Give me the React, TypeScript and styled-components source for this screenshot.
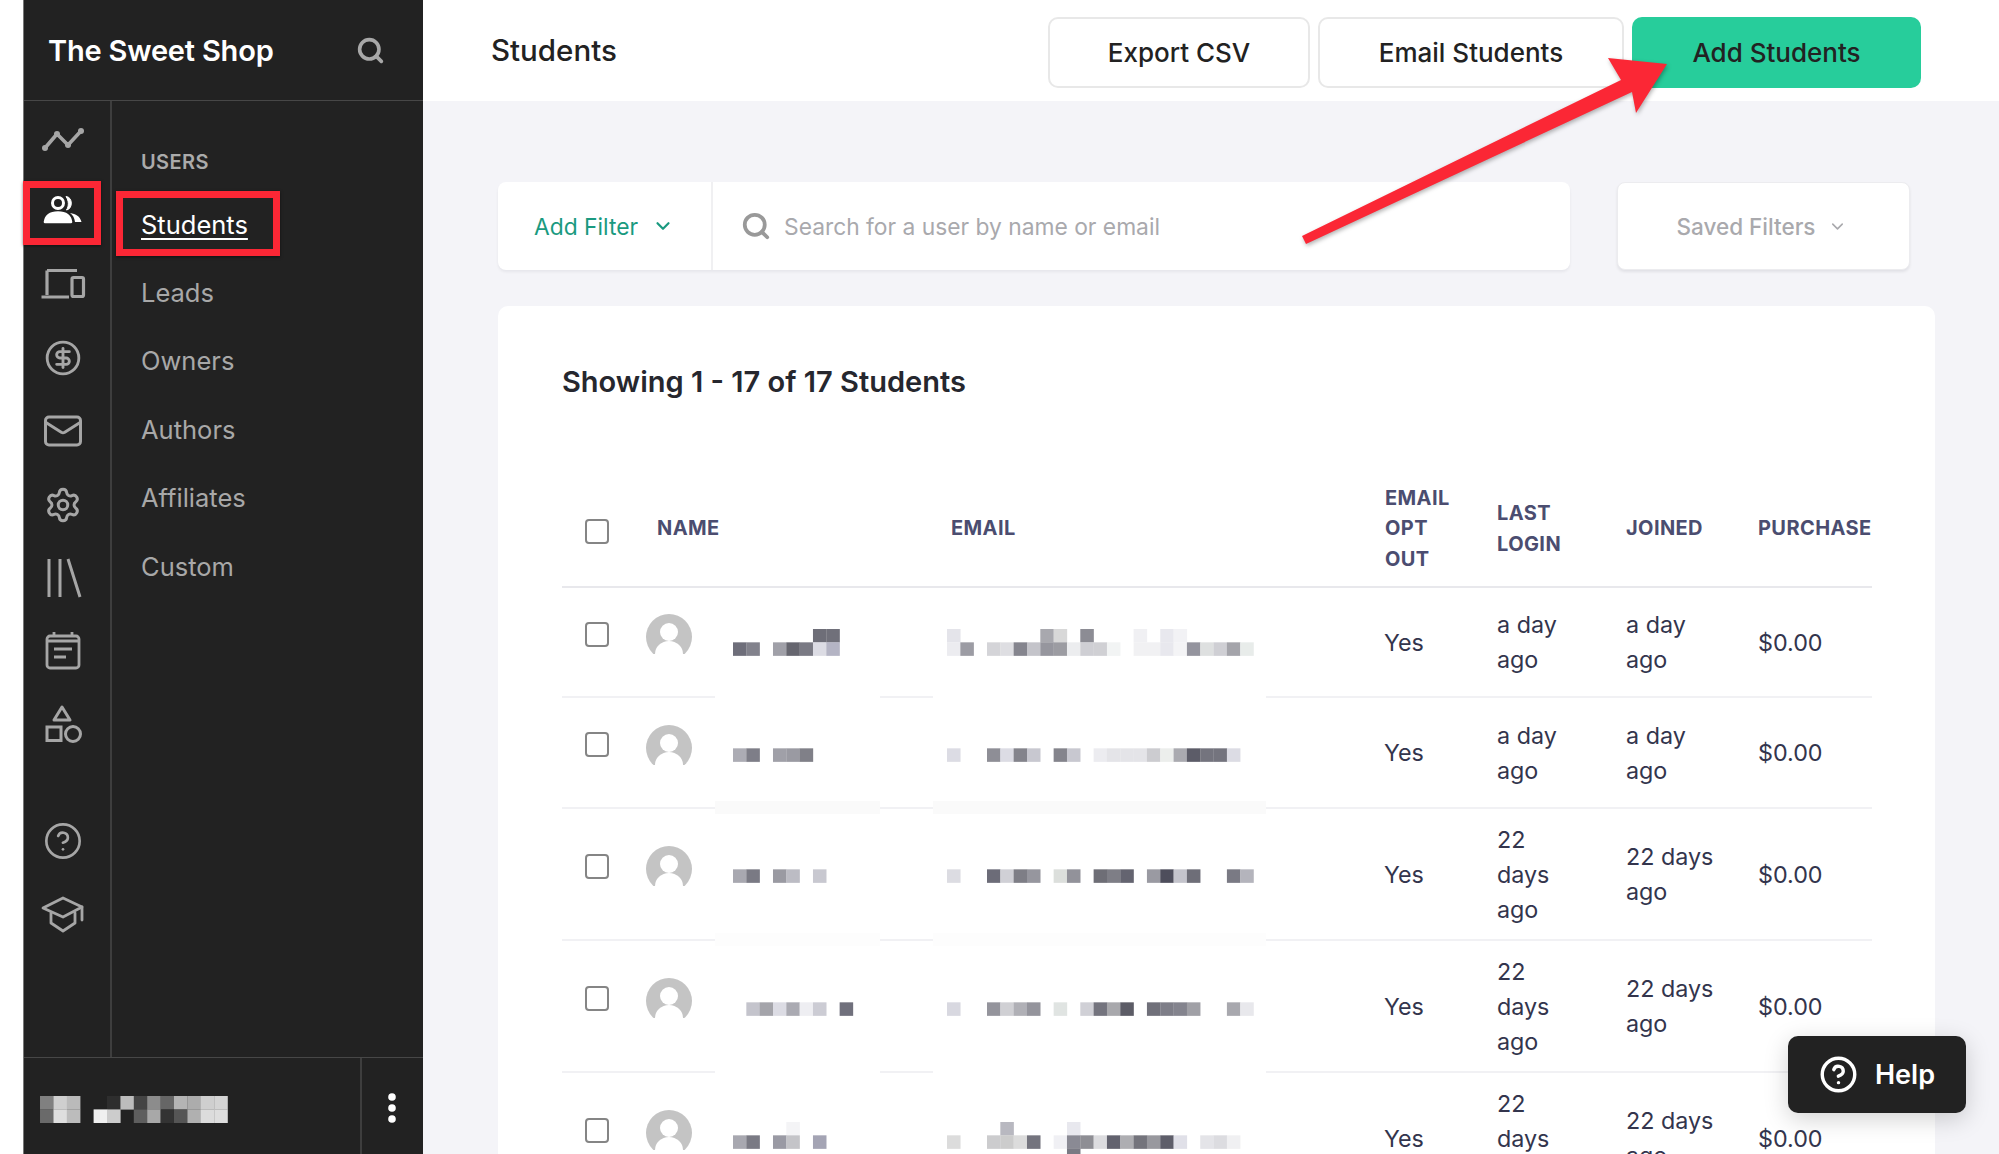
import React from "react";
import styled, { createGlobalStyle } from "styled-components";
import { Search, ChevronDown, CircleDollarSign, Mail, Settings, CircleHelp } from "lucide-react";

const Global = createGlobalStyle`
  html, body { margin: 0; padding: 0; background: #fff; }
  body { font-family: Inter, "Noto Sans", "Liberation Sans", sans-serif; }
  * { box-sizing: border-box; }
`;

const Page = styled.div`
  position: relative;
  width: 1999px;
  height: 1154px;
  display: flex;
  overflow: hidden;
  padding-left: 23px;
  background: #fff;
`;

const Sidebar = styled.aside`
  width: 400px;
  flex: none;
  height: 1154px;
  display: flex;
  flex-direction: column;
  background: #222;
  border-left: 1px solid #777;
`;

const SideHead = styled.div`
  height: 101px;
  flex: none;
  display: flex;
  align-items: center;
  justify-content: space-between;
  padding: 0 38px 0 24px;
  border-bottom: 1px solid #474747;
  color: #fff;
  font-size: 29px;
  font-weight: 600;
  letter-spacing: -0.2px;
`;

const SideBody = styled.div`
  flex: 1;
  display: flex;
  min-height: 0;
`;

const Rail = styled.nav`
  width: 88px;
  flex: none;
  display: flex;
  flex-direction: column;
  border-right: 2px solid #3e3e3e;
`;

const RailItem = styled.div<{ $active?: boolean }>`
  position: relative;
  height: 73.4px;
  flex: none;
  display: flex;
  align-items: center;
  justify-content: center;
  padding-right: 9px;
  color: ${(p) => (p.$active ? "#fff" : "#a6a6a6")};
`;

const RailGap = styled.div`
  height: 43px;
  flex: none;
`;

const RedBox = styled.div<{ $l: number; $t: number; $w: number; $h: number }>`
  position: absolute;
  left: ${(p) => p.$l}px;
  top: ${(p) => p.$t}px;
  width: ${(p) => p.$w}px;
  height: ${(p) => p.$h}px;
  border: 7px solid #fb2735;
  box-shadow: 0 1px 3px rgba(0, 0, 0, 0.5);
`;

const Menu = styled.div`
  flex: 1;
  padding: 45px 0 0 29px;
`;

const MenuHead = styled.div`
  height: 32px;
  margin-bottom: 11.5px;
  display: flex;
  align-items: center;
  color: #ababab;
  font-size: 20px;
  font-weight: 600;
  letter-spacing: 0.4px;
`;

const MenuItem = styled.div<{ $active?: boolean }>`
  position: relative;
  height: 68.4px;
  display: flex;
  align-items: center;
  padding-top: 1px;
  font-size: 25.5px;
  color: ${(p) => (p.$active ? "#fff" : "#a8a8a8")};
  text-decoration: ${(p) => (p.$active ? "underline" : "none")};
  text-underline-offset: 4px;
  text-decoration-thickness: 2px;
`;

const SideFoot = styled.div`
  height: 97px;
  flex: none;
  display: flex;
  border-top: 1px solid #474747;
`;

const FootUser = styled.div`
  flex: 1;
  display: flex;
  align-items: center;
  padding: 6px 0 0 16px;
`;

const FootMenu = styled.div`
  width: 63px;
  flex: none;
  display: flex;
  align-items: center;
  justify-content: center;
  padding: 3px 2px 0 0;
  border-left: 2px solid #3e3e3e;
`;

const Main = styled.main`
  flex: 1;
  min-width: 0;
  display: flex;
  flex-direction: column;
  background: #f4f4f8;
`;

const TopBar = styled.header`
  height: 101px;
  flex: none;
  display: flex;
  align-items: center;
  padding: 0 78px 0 68px;
  background: #fff;
`;

const PageTitle = styled.h1`
  margin: 0 auto 1px 0;
  font-size: 29.5px;
  font-weight: 500;
  color: #222;
`;

const ActionButton = styled.button<{ $w: number; $primary?: boolean }>`
  width: ${(p) => p.$w}px;
  height: 71px;
  margin-left: 8px;
  margin-top: 3px;
  border-radius: 10px;
  font: 500 26px Inter, sans-serif;
  color: #222;
  background: ${(p) => (p.$primary ? "#27cd9b" : "#fff")};
  border: ${(p) => (p.$primary ? "none" : "2px solid #e8e8e8")};
`;

const Content = styled.div`
  flex: 1;
  min-height: 0;
  padding: 81px 64px 0 75px;
`;

const FilterRow = styled.div`
  display: flex;
  justify-content: space-between;
  padding-right: 25px;
`;

const FilterBox = styled.div`
  width: 1072px;
  height: 88px;
  display: flex;
  background: #fff;
  border-radius: 8px;
  box-shadow: 0 2px 3px rgba(0, 0, 30, 0.06);
`;

const AddFilter = styled.div`
  width: 215px;
  flex: none;
  display: flex;
  align-items: center;
  gap: 14px;
  padding-left: 36px;
  border-right: 2px solid #f0f0f2;
  color: #1a9a80;
  font-size: 22.8px;
`;

const SearchField = styled.div`
  flex: 1;
  display: flex;
  align-items: center;
  gap: 13px;
  padding-left: 28px;
  color: #a9a9ad;
  font-size: 22.8px;
`;

const SavedFilters = styled.div`
  width: 293px;
  height: 88px;
  display: flex;
  align-items: center;
  justify-content: center;
  gap: 12px;
  padding-right: 4px;
  background: #fff;
  border: 1px solid #ececef;
  border-radius: 8px;
  box-shadow: 0 2px 3px rgba(0, 0, 30, 0.08);
  color: #a9a9ad;
  font-size: 22.5px;
  font-weight: 500;
`;

const Card = styled.section`
  height: 900px;
  margin-top: 36px;
  padding: 59px 63px 0 64px;
  background: #fff;
  border-radius: 10px;
`;

const CardTitle = styled.h2`
  margin: 0 0 72px;
  font-size: 29px;
  line-height: 34px;
  font-weight: 600;
  color: #26272e;
`;

const TableClip = styled.div`
  width: 1310px;
  overflow: hidden;
`;

const columns = "84px 301px 438px 112px 129px 132px 114px";

const HeadRow = styled.div`
  display: grid;
  grid-template-columns: ${columns};
  align-items: center;
  height: 117px;
  border-bottom: 2px solid #e8e8ec;
`;

const HeadCell = styled.div<{ $pad?: number }>`
  padding-left: ${(p) => p.$pad || 0}px;
  font-size: 20px;
  line-height: 30.5px;
  font-weight: 700;
  letter-spacing: 0.4px;
  color: #4b4d70;
  white-space: pre-line;
  overflow: hidden;
`;

const Row = styled.div<{ $h: number }>`
  position: relative;
  display: grid;
  grid-template-columns: ${columns};
  align-items: center;
  height: ${(p) => p.$h}px;
  border-bottom: 2px solid #f1f1f4;
`;

const BlurPatch = styled.div<{ $l: number; $w: number; $tone: string }>`
  position: absolute;
  left: ${(p) => p.$l}px;
  width: ${(p) => p.$w}px;
  bottom: -7px;
  height: 13px;
  background: ${(p) => p.$tone};
  z-index: 1;
`;

const CheckCell = styled.div`
  padding-left: 23px;
  display: flex;
`;

const Check = styled.span<{ $head?: boolean }>`
  display: block;
  width: 24px;
  height: 25px;
  border: 2px solid #858585;
  border-radius: 4px;
  margin-top: ${(p) => (p.$head ? 5 : -16)}px;
`;

const NameCell = styled.div`
  display: flex;
  align-items: center;
  gap: 41px;
`;

const AvatarSvg = styled.svg`
  flex: none;
  margin-top: -10px;
`;

const Pixels = styled.svg<{ $dy?: number }>`
  display: block;
  overflow: visible;
  transform: translateY(${(p) => p.$dy || 0}px);
`;

const Cell = styled.div<{ $right?: number }>`
  padding-right: ${(p) => p.$right || 0}px;
  font-size: 23.3px;
  line-height: 35px;
  color: #33354d;
`;

const YesCell = styled(Cell)`
  margin-left: -1px;
`;

const HelpButton = styled.button`
  position: absolute;
  left: 1788px;
  top: 1036px;
  width: 178px;
  height: 77px;
  display: flex;
  align-items: center;
  justify-content: center;
  gap: 17px;
  border: none;
  border-radius: 10px;
  background: #222;
  color: #fff;
  font: 600 27px Inter, sans-serif;
  box-shadow: 0 6px 24px rgba(0, 0, 0, 0.18);
  z-index: 3;
`;

const ArrowSvg = styled.svg`
  position: absolute;
  left: 1295px;
  top: 50px;
  z-index: 2;
  filter: drop-shadow(1px 2px 2px rgba(0, 0, 0, 0.3));
`;

const Stroke = { fill: "none", stroke: "currentColor", strokeWidth: 2.6, strokeLinecap: "round", strokeLinejoin: "round" } as const;

const IconChart = () => (
  <svg width="44" height="44" viewBox="0 0 44 44">
    <path d="M4 32 L16 18 L27 29 L40 15" {...Stroke} strokeWidth={3.6} />
    <circle cx="4" cy="32" r="3" fill="currentColor" />
    <circle cx="16" cy="18" r="3" fill="currentColor" />
    <circle cx="27" cy="29" r="3" fill="currentColor" />
    <circle cx="40" cy="15" r="3" fill="currentColor" />
  </svg>
);

const IconUsers = () => (
  <svg width="44" height="44" viewBox="0 0 44 44">
    <circle cx="17" cy="14" r="5.5" {...Stroke} strokeWidth={3} />
    <path d="M4 33 C5 25 11 23.5 17 23.5 C23 23.5 29 25 30 33 Z" {...Stroke} strokeWidth={2.6} fill="currentColor" />
    <path d="M25 7.5 C32 8 32 20 25.5 21 C28 17 28 12 25 7.5 Z" fill="currentColor" stroke="currentColor" strokeWidth="1" />
    <path d="M29 24 C35 25 39 27 40.5 33 L34 33 C33.5 29 32 26 29 24 Z" fill="currentColor" />
  </svg>
);

const IconDevices = () => (
  <svg width="46" height="44" viewBox="0 0 46 44">
    <path d="M7 8.5 H37 M7 8.5 V33 M1.5 35 H29" {...Stroke} strokeWidth={3.2} strokeLinecap="butt" />
    <rect x="32" y="15.5" width="11.5" height="19" rx="1.5" {...Stroke} strokeWidth={3.2} />
  </svg>
);

const IconLibrary = () => (
  <svg width="44" height="44" viewBox="0 0 44 44">
    <path d="M8 3 V41 M19 3 V41 M27 3 L39 41" {...Stroke} strokeWidth={3} strokeLinecap="butt" />
  </svg>
);

const IconCalendar = () => (
  <svg width="44" height="44" viewBox="0 0 44 44">
    <rect x="6" y="7" width="32" height="32" rx="3" {...Stroke} strokeWidth={2.8} />
    <path d="M13 3 V7 M31 3 V7 M6 12 H38" {...Stroke} strokeWidth={2.8} strokeLinecap="butt" />
    <path d="M13 20 H31 M13 28 H25" {...Stroke} strokeWidth={3} strokeLinecap="butt" />
  </svg>
);

const IconShapes = () => (
  <svg width="44" height="44" viewBox="0 0 44 44">
    <path d="M21 4 L29 17 H13 Z" {...Stroke} strokeWidth={3} />
    <rect x="6" y="24" width="14" height="13.5" {...Stroke} strokeWidth={3} strokeLinejoin="miter" />
    <circle cx="32" cy="31" r="7.5" {...Stroke} strokeWidth={3} />
  </svg>
);

const IconCap = () => (
  <svg width="44" height="44" viewBox="0 0 44 44">
    <path d="M2 15 L22 5 L41 14 L22 24 Z" {...Stroke} strokeWidth={2.8} />
    <path d="M10 20 V30 L22 38 L34 30 V20" {...Stroke} strokeWidth={2.8} />
    <path d="M41 14 V27" {...Stroke} strokeWidth={2.8} />
  </svg>
);

const IconDots = () => (
  <svg width="10" height="34" viewBox="0 0 10 34">
    <circle cx="5" cy="6" r="3.8" fill="#fff" />
    <circle cx="5" cy="17" r="3.8" fill="#fff" />
    <circle cx="5" cy="28" r="3.8" fill="#fff" />
  </svg>
);

const Avatar = () => (
  <AvatarSvg width="46" height="46" viewBox="0 0 46 46">
    <circle cx="23" cy="23" r="23" fill="#c4c4c4" />
    <rect x="0" y="40" width="46" height="6" fill="#fff" />
    <circle cx="23" cy="18" r="9" fill="#fff" />
    <ellipse cx="23" cy="40" rx="14" ry="13" fill="#fff" />
  </AvatarSvg>
);

type PixelRows = { upper?: string[]; lower: string[]; below?: string[] };

const PixelBlock = ({ data, cell = 13.33, dy }: { data: PixelRows; cell?: number; dy?: number }) => {
  const count = Math.max(data.lower.length, data.upper?.length ?? 0);
  const rows: [string[] | undefined, number][] = [
    [data.upper, 0],
    [data.lower, 1],
    [data.below, 2],
  ];
  return (
    <Pixels $dy={dy} width={count * cell} height={cell * 2} viewBox={`0 0 ${count * cell} ${cell * 2}`}>
      {rows.map(([row, r]) =>
        row?.map((c, i) =>
          c ? <rect key={`${r}-${i}`} x={i * cell} y={r * cell} width={cell + 0.2} height={cell + 0.2} fill={`#${c}`} /> : null
        )
      )}
    </Pixels>
  );
};

const footData: PixelRows = {
  upper: ["808080", "cfcfcf", "bababa", "", "", "2e2e2e", "bcbcbc", "444444", "8c8c8c", "666666", "b4b4b4", "acacac", "cfcfcf", "d4d4d4"],
  lower: ["6a6a6a", "dedede", "bcbcbc", "", "f0f0f0", "cccccc", "", "5e5e5e", "a8a8a8", "333333", "555555", "b0b0b0", "dcdcdc", "dedede"],
};

type RowData = {
  h: number;
  name: PixelRows;
  email: PixelRows;
  dy: number;
  login: string;
  joined: string;
  tone: string;
};

const rows: RowData[] = [
  {
    h: 110,
    dy: 0,
    login: "a day ago",
    joined: "a day ago",
    tone: "#fff",
    name: {
      upper: ["", "", "", "", "", "", "6e6e78", "70707a"],
      lower: ["6e6e7a", "82828c", "", "a0a0a8", "66666f", "7a7a84", "dcdce4", "b4b4c4"],
    },
    email: {
      upper: ["e4e4ea", "", "", "", "", "", "", "a8a8ae", "d8d8d8", "", "8c8c94", "", "", "", "f0f0f3", "", "e8e8ee", "f2f2f5"],
      lower: ["ececf0", "9c9ca4", "", "d4d4d8", "dedee2", "85858e", "c4c4ca", "96969e", "9c9ca2", "ecedef", "cfcfd4", "d0d0d4", "f2f4f4", "", "f1f1f3", "f1f1f3", "e8e8ee", "f4f4f6", "94949e", "dee0e0", "cfcfd4", "a4a4aa", "e8ecea"],
    },
  },
  {
    h: 111,
    dy: -4,
    login: "a day ago",
    joined: "a day ago",
    tone: "#fafafa",
    name: { lower: ["acacb4", "7e7e88", "", "a0a0a8", "9a9aa2", "808088"] },
    email: {
      lower: ["dcdce4", "", "", "8e8e96", "dcdce4", "84848c", "c8c8d0", "", "84848c", "c8c8d0", "", "ececf0", "e4e4e8", "e4e4e8", "e4e4e8", "ccccd0", "eceeec", "aaaab0", "5c5c68", "74747e", "74747e", "dcdce4"],
    },
  },
  {
    h: 132,
    dy: -5,
    login: "22 days ago",
    joined: "22 days ago",
    tone: "#fdfdfd",
    name: { lower: ["a8a8b0", "7a7a84", "", "9a9aa2", "bcbcc4", "", "c8c8d0"] },
    email: {
      lower: ["dcdce2", "", "", "6c6c78", "d0d0d6", "7e7e86", "96969e", "", "dcdfdc", "92929a", "", "6e6e76", "7e7e86", "646470", "", "9a9aa2", "4e4e5c", "c4c4cc", "6e6e78", "", "", "7a7a84", "b4b4bc"],
    },
  },
  {
    h: 132,
    dy: -4,
    login: "22 days ago",
    joined: "22 days ago",
    tone: "#fff",
    name: { lower: ["", "c4c4cc", "a4a4aa", "dcdce4", "aaaab2", "eeeef2", "ccccd4", "", "70707c"] },
    email: {
      lower: ["d8d8e0", "", "", "94949c", "d0d0d4", "b0b0b6", "94949c", "", "e0e4e2", "", "d0d0d6", "74747e", "a8a8ac", "5c5c66", "", "70707a", "7e7e88", "84848e", "a0a0a6", "", "", "a8a8ae", "e8e8ec"],
    },
  },
  {
    h: 132,
    dy: -3,
    login: "22 days ago",
    joined: "22 days ago",
    tone: "#fff",
    name: {
      upper: ["", "", "", "", "f4f4f6"],
      lower: ["a8a8b0", "7a7a84", "", "9a9aa4", "c4c4c8", "", "a4a4b4"],
    },
    email: {
      upper: ["", "", "", "", "b8b8c0", "", "", "", "", "e8e8ee"],
      lower: ["dcdcdc", "", "", "ccccce", "cccccc", "dcdcdc", "74747e", "", "f0f0f4", "8a8a94", "8e8e94", "dcdcdf", "62626e", "aeaeb2", "74747c", "98989e", "5e5e6a", "e0e0e8", "", "e4e4e8", "dcdce0", "f0f0f2"],
      below: ["", "", "", "", "", "", "", "", "", "7a7a84"],
    },
  },
];

export default function App() {
  return (
    <Page>
      <Global />
      <Sidebar>
        <SideHead>
          <span>The Sweet Shop</span>
          <Search size={29} color="#a8a8a8" strokeWidth={3} />
        </SideHead>
        <SideBody>
          <Rail>
            <RailItem><IconChart /></RailItem>
            <RailItem $active>
              <IconUsers />
              <RedBox $l={-1} $t={7} $w={78} $h={64} />
            </RailItem>
            <RailItem><IconDevices /></RailItem>
            <RailItem><CircleDollarSign size={38} strokeWidth={1.8} /></RailItem>
            <RailItem><Mail size={42} strokeWidth={1.7} /></RailItem>
            <RailItem><Settings size={38} strokeWidth={1.9} /></RailItem>
            <RailItem><IconLibrary /></RailItem>
            <RailItem><IconCalendar /></RailItem>
            <RailItem><IconShapes /></RailItem>
            <RailGap />
            <RailItem><CircleHelp size={40} strokeWidth={1.6} /></RailItem>
            <RailItem><IconCap /></RailItem>
          </Rail>
          <Menu>
            <MenuHead>USERS</MenuHead>
            <MenuItem $active>
              Students
              <RedBox $l={-25} $t={1} $w={164} $h={65} />
            </MenuItem>
            <MenuItem>Leads</MenuItem>
            <MenuItem>Owners</MenuItem>
            <MenuItem>Authors</MenuItem>
            <MenuItem>Affiliates</MenuItem>
            <MenuItem>Custom</MenuItem>
          </Menu>
        </SideBody>
        <SideFoot>
          <FootUser><PixelBlock data={footData} cell={13.4} /></FootUser>
          <FootMenu><IconDots /></FootMenu>
        </SideFoot>
      </Sidebar>
      <Main>
        <TopBar>
          <PageTitle>Students</PageTitle>
          <ActionButton $w={262}>Export CSV</ActionButton>
          <ActionButton $w={306}>Email Students</ActionButton>
          <ActionButton $w={289} $primary>Add Students</ActionButton>
        </TopBar>
        <Content>
          <FilterRow>
            <FilterBox>
              <AddFilter>
                Add Filter
                <ChevronDown size={22} strokeWidth={2.4} />
              </AddFilter>
              <SearchField>
                <Search size={30} color="#999" strokeWidth={3} />
                Search for a user by name or email
              </SearchField>
            </FilterBox>
            <SavedFilters>
              Saved Filters
              <ChevronDown size={19} strokeWidth={2} />
            </SavedFilters>
          </FilterRow>
          <Card>
            <CardTitle>Showing 1 - 17 of 17 Students</CardTitle>
            <TableClip>
              <HeadRow>
                <CheckCell><Check $head /></CheckCell>
                <HeadCell $pad={11}>NAME</HeadCell>
                <HeadCell $pad={4}>EMAIL</HeadCell>
                <HeadCell>{"EMAIL\nOPT\nOUT"}</HeadCell>
                <HeadCell>{"LAST\nLOGIN"}</HeadCell>
                <HeadCell>JOINED</HeadCell>
                <HeadCell>PURCHASES</HeadCell>
              </HeadRow>
              {rows.map((r, i) => (
                <Row key={i} $h={r.h}>
                  <CheckCell><Check /></CheckCell>
                  <NameCell>
                    <Avatar />
                    <PixelBlock data={r.name} dy={r.dy} />
                  </NameCell>
                  <PixelBlock data={r.email} dy={r.dy} />
                  <YesCell>Yes</YesCell>
                  <Cell $right={56}>{r.login}</Cell>
                  <Cell $right={28}>{r.joined}</Cell>
                  <Cell>$0.00</Cell>
                  <BlurPatch $l={153} $w={165} $tone={r.tone} />
                  <BlurPatch $l={371} $w={333} $tone={r.tone} />
                </Row>
              ))}
            </TableClip>
          </Card>
        </Content>
      </Main>
      <ArrowSvg width="380" height="200" viewBox="1295 50 380 200">
        <polygon points="1302,236 1621,80 1608,58 1667,64 1636,113 1632,92 1306,244" fill="#fb2735" />
      </ArrowSvg>
      <HelpButton>
        <CircleHelp size={39} strokeWidth={2.1} />
        Help
      </HelpButton>
    </Page>
  );
}
